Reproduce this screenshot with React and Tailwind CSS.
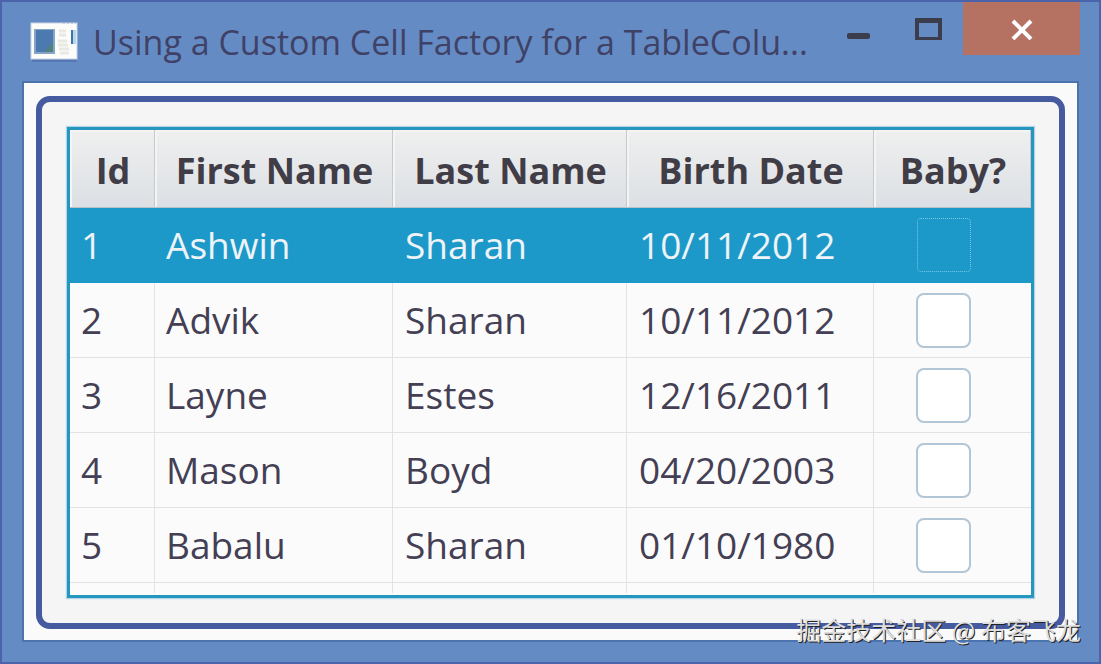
import React, { useState } from "react";

const COLUMNS = ["Id", "First Name", "Last Name", "Birth Date", "Baby?"];

const PEOPLE = [
  { id: 1, firstName: "Ashwin", lastName: "Sharan", birthDate: "10/11/2012", baby: false },
  { id: 2, firstName: "Advik", lastName: "Sharan", birthDate: "10/11/2012", baby: false },
  { id: 3, firstName: "Layne", lastName: "Estes", birthDate: "12/16/2011", baby: false },
  { id: 4, firstName: "Mason", lastName: "Boyd", birthDate: "04/20/2003", baby: false },
  { id: 5, firstName: "Babalu", lastName: "Sharan", birthDate: "01/10/1980", baby: false },
];

const WindowIcon = () => (
  <svg width="48" height="42" viewBox="0 0 48 42" className="shrink-0" aria-hidden="true">
    <rect x="2" y="38" width="45" height="3" fill="#5677b4" />
    <rect x="1" y="2" width="46" height="36" fill="#fcfcfb" stroke="#c8d6e8" strokeWidth="1" />
    <rect x="4" y="8" width="21" height="25" fill="#85a5c4" />
    <rect x="6" y="9" width="17" height="22" fill="#4c79b0" />
    <path d="M14 31 L23 21 V31 Z" fill="#52827f" />
    <path d="M29 10 H36 M29 14 H36 M28 20 H37 M28 24 H38 M29 28 H39 M30 32 H39" stroke="#e8e9e2" strokeWidth="3" />
    <rect x="41" y="9" width="2" height="14" fill="#4471ad" />
    <rect x="43" y="9" width="3" height="14" fill="#b6d6ea" />
    <path d="M33 2 H46" stroke="#9fb3cd" strokeWidth="1" strokeDasharray="2 2" />
  </svg>
);

const TitleBar = () => (
  <header className="flex items-start h-[79px]">
    <div className="flex items-center gap-[15px] h-[79px] pl-2">
      <WindowIcon />
      <h1 className="text-[34px] leading-[40px] whitespace-nowrap text-[#3f4266]">
        Using a Custom Cell Factory for a TableColu...
      </h1>
    </div>
    <div className="flex ml-auto -mr-px">
      <button type="button" aria-label="Minimize" className="w-[70px] h-[54px] flex items-center justify-center">
        <svg width="24" height="24" viewBox="0 0 24 24" aria-hidden="true">
          <rect x="1" y="16" width="23" height="6" rx="2" fill="#3b3d4d" />
        </svg>
      </button>
      <button type="button" aria-label="Maximize" className="w-[70px] h-[54px] flex items-center justify-center">
        <svg width="28" height="24" viewBox="0 0 28 24" aria-hidden="true">
          <path fillRule="evenodd" d="M1 1 H28 V23 H1 Z M5 6 V20 H24 V6 Z" fill="#3b3d4d" />
        </svg>
      </button>
      <button type="button" aria-label="Close" className="w-[117px] h-[53px] flex items-center justify-center bg-[#b57263]">
        <svg width="22" height="22" viewBox="0 0 22 22" aria-hidden="true">
          <path d="M2 3 L20 21 M20 3 L2 21" stroke="#fff" strokeWidth="4" />
        </svg>
      </button>
    </div>
  </header>
);

const PersonRow = ({ person, selected, onToggle }) => {
  const cell = selected ? "border-[#1c99c8]" : "border-[#e3e3e3]";
  return (
    <tr className={selected ? "h-[75px] bg-[#1c99c8] text-[#eef3f8]" : "h-[75px] bg-[#fbfbfb] text-[#443f54]"}>
      <td className={`border-r border-b pl-[11px] ${cell}`}>{person.id}</td>
      <td className={`border-r border-b pl-[11px] ${cell}`}>{person.firstName}</td>
      <td className={`border-r border-b pl-3 ${cell}`}>{person.lastName}</td>
      <td className={`border-r border-b pl-3 ${cell}`}>{person.birthDate}</td>
      <td className={`border-b pr-[18px] ${cell}`}>
        <input
          type="checkbox"
          aria-label={`${person.firstName} is a baby`}
          checked={person.baby}
          onChange={onToggle}
          className={
            selected
              ? "block mx-auto size-[54px] appearance-none rounded-sm border border-dotted border-[#7cc8e8] bg-transparent checked:bg-[#eef3f8]"
              : "block mx-auto size-[55px] appearance-none rounded-lg border-2 border-[#b3c6d6] bg-white checked:bg-[#443f54]"
          }
        />
      </td>
    </tr>
  );
};

const App = () => {
  const [people, setPeople] = useState(PEOPLE);

  const toggleBaby = (id) => {
    setPeople((prev) => prev.map((p) => (p.id === id ? { ...p, baby: !p.baby } : p)));
  };

  return (
    <div className="relative min-h-screen flex flex-col bg-[#658bc5] border-2 border-[#4a63ab] px-5 pb-5 font-['Open_Sans',sans-serif]">
      <TitleBar />

      {/* Client area */}
      <main className="grow flex flex-col bg-[#fafafa] border-2 border-[#4b73ad] px-3 pt-[13px] pb-[11px]">
        <div className="grow flex flex-col rounded-[14px] border-[6px] border-[#455a9f] bg-[#f5f5f6] p-[25px]">
          <div className="grow border-[3px] border-[#2596be] bg-[#fbfbfb] shadow-[0_0_1px_1px_#b5d5e8]">
            <table className="w-full table-fixed border-separate border-spacing-0 text-[37px] leading-[50px] text-left">
              <colgroup>
                <col className="w-[85px]" />
                <col className="w-[238px]" />
                <col className="w-[234px]" />
                <col className="w-[247px]" />
                <col />
              </colgroup>
              <thead>
                <tr className="h-[78px]">
                  {COLUMNS.map((name) => (
                    <th
                      key={name}
                      scope="col"
                      className="bg-linear-to-b from-[#efefef] to-[#dce0e4] border-r border-b border-r-[#c6cacd] border-b-[#b9c2c8] shadow-[inset_2px_2px_0_#f4f4f4] pt-1 pl-0.5 text-center text-[36px] font-bold text-[#403d47]"
                    >
                      {name}
                    </th>
                  ))}
                </tr>
              </thead>
              <tbody>
                {people.map((person) => (
                  <PersonRow
                    key={person.id}
                    person={person}
                    selected={person.id === 1}
                    onToggle={() => toggleBaby(person.id)}
                  />
                ))}
                {/* Partly visible empty row */}
                <tr className="h-[10px]" aria-hidden="true">
                  <td className="border-r border-[#e3e3e3]" />
                  <td className="border-r border-[#e3e3e3]" />
                  <td className="border-r border-[#e3e3e3]" />
                  <td className="border-r border-[#e3e3e3]" />
                  <td />
                </tr>
              </tbody>
            </table>
          </div>
        </div>
      </main>

      <span className="absolute right-[18px] bottom-4 text-[25px] leading-[34px] whitespace-nowrap text-[#dedede] [text-shadow:1px_1px_0_#222] font-['Noto_Sans_CJK_SC',sans-serif]">
        掘金技术社区 @ 布客飞龙
      </span>
    </div>
  );
};

export default App;
